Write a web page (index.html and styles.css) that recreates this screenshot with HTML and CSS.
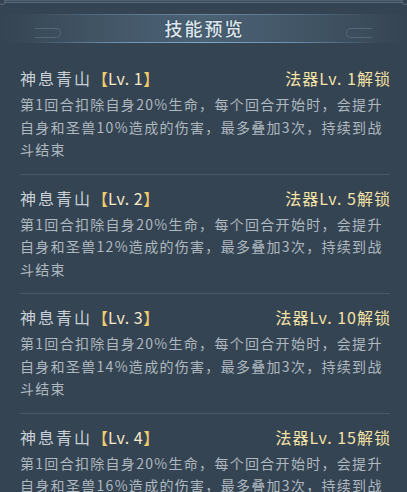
FILE: index.html
```html
<!DOCTYPE html>
<html lang="zh">
<head>
<meta charset="utf-8">
<link rel="stylesheet" href="styles.css">
</head>
<body>
<div class="panel">
  <div class="topline"><span class="corner left"></span><span class="corner right"></span></div>
  <div class="header">
    <span class="pill left"></span>
    <h1 class="title">技能预览</h1>
    <span class="pill right"></span>
  </div>
  <ul class="list">
    <li class="item">
      <div class="row">
        <span class="name">神息青山<span class="br">【</span><span class="lv">Lv. 1</span><span class="br">】</span></span>
        <span class="unlock">法器Lv. 1解锁</span>
      </div>
      <p class="desc">第1回合扣除自身20%生命，每个回合开始时，会提升自身和圣兽10%造成的伤害，最多叠加3次，持续到战斗结束</p>
    </li>
    <li class="item">
      <div class="row">
        <span class="name">神息青山<span class="br">【</span><span class="lv">Lv. 2</span><span class="br">】</span></span>
        <span class="unlock">法器Lv. 5解锁</span>
      </div>
      <p class="desc">第1回合扣除自身20%生命，每个回合开始时，会提升自身和圣兽12%造成的伤害，最多叠加3次，持续到战斗结束</p>
    </li>
    <li class="item">
      <div class="row">
        <span class="name">神息青山<span class="br">【</span><span class="lv">Lv. 3</span><span class="br">】</span></span>
        <span class="unlock">法器Lv. 10解锁</span>
      </div>
      <p class="desc">第1回合扣除自身20%生命，每个回合开始时，会提升自身和圣兽14%造成的伤害，最多叠加3次，持续到战斗结束</p>
    </li>
    <li class="item">
      <div class="row">
        <span class="name">神息青山<span class="br">【</span><span class="lv">Lv. 4</span><span class="br">】</span></span>
        <span class="unlock">法器Lv. 15解锁</span>
      </div>
      <p class="desc">第1回合扣除自身20%生命，每个回合开始时，会提升自身和圣兽16%造成的伤害，最多叠加3次，持续到战斗结束</p>
    </li>
  </ul>
</div>
</body>
</html>
```

FILE: styles.css
```css
* { box-sizing: border-box; }
html, body {
  margin: 0;
  padding: 0;
  width: 407px;
  height: 492px;
  overflow: hidden;
  background: #354452;
}
.panel {
  position: relative;
  width: 407px;
  height: 492px;
  overflow: hidden;
  background: #354452;
  font-family: "Noto Sans CJK SC", "Noto Sans", sans-serif;
}
.topline {
  position: relative;
  height: 3px;
  margin: 0 4px;
  border-top: 1px solid #4f6070;
  border-bottom: 1px solid #55677a;
  background: #3c4d5c;
}
.corner {
  position: absolute;
  top: -4px;
  width: 8px;
  height: 8px;
  border: 1px solid #5a6d7e;
  border-radius: 50%;
}
.corner.left { left: -6px; }
.corner.right { right: -6px; }
.header {
  position: relative;
  margin-top: 11px;
  height: 29px;
  display: flex;
  align-items: center;
  justify-content: center;
  background: linear-gradient(90deg, rgba(74,96,114,0) 0%, rgba(74,96,114,0.5) 20%, #4b6275 50%, rgba(74,96,114,0.5) 80%, rgba(74,96,114,0) 100%);
}
.header::before {
  content: "";
  position: absolute;
  left: 30px;
  right: 30px;
  top: 0;
  height: 1px;
  background: linear-gradient(90deg, rgba(110,140,165,0) 0%, rgba(110,140,165,0.6) 30%, rgba(120,150,175,0.7) 50%, rgba(110,140,165,0.6) 70%, rgba(110,140,165,0) 100%);
}
.header::after {
  content: "";
  position: absolute;
  left: 30px;
  right: 30px;
  bottom: 0;
  height: 1px;
  background: linear-gradient(90deg, rgba(120,160,195,0) 0%, rgba(120,160,195,0.8) 25%, #7ea6c6 50%, rgba(120,160,195,0.8) 75%, rgba(120,160,195,0) 100%);
}
.title {
  margin: 0 0 0 2px;
  font-size: 18px;
  font-weight: 500;
  letter-spacing: 2px;
  color: #dde6ee;
  line-height: 29px;
  text-shadow: 0 0 2px rgba(20,30,40,0.6);
}
.pill {
  position: absolute;
  top: 14px;
  width: 26px;
  height: 10px;
  border: 1px solid rgba(110,135,155,0.45);
  border-radius: 5px;
}
.pill.left { left: 35px; border-left: none; border-radius: 0 5px 5px 0; }
.pill.right { right: 35px; border-right: none; border-radius: 5px 0 0 5px; }
.list {
  list-style: none;
  margin: 0;
  padding: 22px 17px 0 20px;
}
.item {
  padding: 0 0 13px;
  border-bottom: 1px solid #485968;
}
.item + .item { padding-top: 10px; }
.row {
  display: flex;
  justify-content: space-between;
  align-items: center;
  height: 26px;
}
.name {
  font-size: 16px;
  letter-spacing: 2px;
  color: #c9d0d6;
}
.br { color: #f0cd6a; letter-spacing: 0; }
.lv { color: #f5e8c8; letter-spacing: 0.5px; }
.unlock {
  font-size: 16px;
  letter-spacing: 1px;
  color: #f5e2a6;
  margin-right: -1px;
}
.desc {
  margin: 2px 3px 0 0;
  font-size: 14px;
  line-height: 22.5px;
  letter-spacing: 1.3px;
  color: #aeb8c0;
}
```
